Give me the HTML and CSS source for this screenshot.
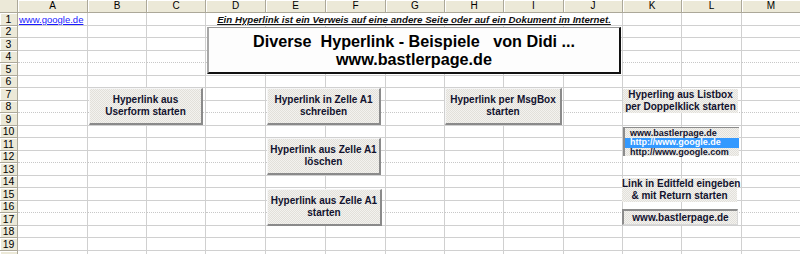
FILE: index.html
```html
<!DOCTYPE html>
<html lang="de">
<head>
  <meta charset="UTF-8" />
  <title>Diverse Hyperlink - Beispiele</title>
  <link rel="stylesheet" href="styles.css">
</head>
<body>
  <div class="sheet">
    <div class="grid" id="grid"></div>

    <div class="title-box">
      <div>Diverse&nbsp; Hyperlink - Beispiele &nbsp; von Didi ...</div>
      <div>www.bastlerpage.de</div>
    </div>

    <button class="macro-btn btn-userform">Hyperlink aus<br>Userform starten</button>
    <button class="macro-btn btn-write">Hyperlink in Zelle A1<br>schreiben</button>
    <button class="macro-btn btn-delete">Hyperlink aus Zelle A1<br>löschen</button>
    <button class="macro-btn btn-start">Hyperlink aus Zelle A1<br>starten</button>
    <button class="macro-btn btn-msgbox">Hyperlink per MsgBox<br>starten</button>

    <div class="form-label label-list">Hyperling aus Listbox<br>per Doppelklick starten</div>
    <ul class="listbox">
      <li>www.bastlerpage.de</li>
      <li class="selected">http://www.google.de</li>
      <li>http://www.google.com</li>
    </ul>

    <div class="form-label label-edit">Link in Editfeld eingeben<br>&amp; mit Return starten</div>
    <div class="editbox">www.bastlerpage.de</div>
  </div>

  <script>
    const columns = ["A", "B", "C", "D", "E", "F", "G", "H", "I", "J", "K", "L", "M"];
    const grid = document.getElementById("grid");

    function addCell(className, text) {
      const div = document.createElement("div");
      div.className = className;
      if (text) div.textContent = text;
      grid.appendChild(div);
      return div;
    }

    addCell("corner");
    columns.forEach(col => addCell("col-head", col));

    for (let row = 1; row <= 20; row++) {
      const dashed = row % 4 === 0 ? " dashed" : "";
      // row 20 is only a sliver at the bottom edge, its number stays hidden
      addCell("row-head", row < 20 ? String(row) : "");

      columns.forEach(col => {
        if (row === 1 && col === "A") {
          const cell = addCell("cell");
          cell.innerHTML = '<a href="#" class="link">www.google.de</a>';
        } else if (row === 1 && col === "D") {
          addCell("cell intro", "Ein Hyperlink ist ein Verweis auf eine andere Seite oder auf ein Dokument im Internet.");
        } else if (row === 1 && "EFGHIJ".includes(col)) {
          return;
        } else {
          addCell("cell" + dashed);
        }
      });
    }
  </script>
</body>
</html>
```

FILE: styles.css
```css
* {
  box-sizing: border-box;
}

body {
  margin: 0;
  background: #fff;
  font-family: "Liberation Sans", Arial, sans-serif;
  overflow: hidden;
}

.sheet {
  position: relative;
  width: 800px;
  height: 254px;
  overflow: hidden;
}

.grid {
  display: grid;
  grid-template-columns: 18px 70px 59px 59px 60px 60px 60px 59px 59px 60px 59px 59px 60px 59px;
  grid-template-rows: 13px repeat(10, 13px 12px);
}

.corner,
.col-head,
.row-head {
  background: #ece9d8;
  border-right: 1px solid #aca899;
  border-bottom: 1px solid #aca899;
  color: #000;
  font-size: 10px;
  display: flex;
  align-items: center;
  justify-content: center;
  line-height: 1;
}

.col-head {
  box-shadow: inset 1px 1px 0 #fff;
}

.row-head {
  box-shadow: inset 1px 1px 0 #fff;
  font-size: 10.5px;
}

.cell {
  border-right: 1px solid #d0d0d0;
  border-bottom: 1px solid #d0d0d0;
  font-size: 10px;
  white-space: nowrap;
  overflow: visible;
}

.cell.dashed {
  border-bottom: 1px dotted #c8c8c8;
}

.link {
  display: block;
  padding: 1px 0 0 1px;
  color: #1a1aff;
  font-size: 9.5px;
  text-decoration: underline;
}

.intro {
  grid-column: span 7;
  text-align: center;
  font-weight: bold;
  font-style: italic;
  text-decoration: underline;
  font-size: 9.7px;
  color: #111;
  padding-top: 1px;
}

.title-box {
  position: absolute;
  left: 207px;
  top: 27px;
  width: 414px;
  height: 47px;
  background: #fdfdfd;
  border-top: 1px solid #9a9a9a;
  border-left: 2px solid #a8a8a8;
  border-right: 2px solid #111;
  border-bottom: 2px solid #111;
  display: flex;
  flex-direction: column;
  justify-content: center;
  align-items: center;
  font-size: 16.2px;
  font-weight: bold;
  line-height: 18px;
  color: #000;
  white-space: nowrap;
}

.macro-btn,
.form-label,
.listbox,
.editbox {
  position: absolute;
  background: repeating-conic-gradient(#e2e0da 0 25%, #f3f2ef 0 50%) 0 0 / 2px 2px;
  color: #12122e;
  font-family: "Liberation Sans", Arial, sans-serif;
  font-weight: bold;
  font-size: 10px;
  line-height: 12.5px;
  text-align: center;
  white-space: nowrap;
}

.macro-btn {
  width: 114px;
  height: 37px;
  padding: 0;
  border-top: 1px solid #f6f6f6;
  border-left: 1px solid #f6f6f6;
  border-right: 2px solid #8a8a8a;
  border-bottom: 2px solid #8a8a8a;
  cursor: pointer;
}

.btn-userform { left: 89px; top: 88px; }
.btn-write { left: 267px; top: 88px; }
.btn-delete { left: 267px; top: 138px; }
.btn-start { left: 267px; top: 189px; width: 115px; }
.btn-msgbox { left: 445px; top: 88px; width: 117px; }

.form-label {
  width: 115px;
  height: 24px;
  padding-top: 0;
  line-height: 12px;
}

.label-list { left: 623px; top: 89px; }
.label-edit { left: 622px; top: 178px; }

.listbox {
  left: 623px;
  top: 127px;
  width: 116px;
  height: 29px;
  margin: 0;
  padding: 1px 0 0;
  list-style: none;
  border-top: 1px solid #8c8c8c;
  border-left: 2px solid #8c8c8c;
  font-size: 9px;
  line-height: 9.3px;
  text-align: left;
}

.listbox li {
  padding-left: 5px;
  height: 9.3px;
}

.listbox li.selected {
  background: #3399ff;
  color: #fff;
}

.editbox {
  left: 622px;
  top: 209px;
  width: 116px;
  height: 16px;
  border-top: 2px solid #8c8c8c;
  border-left: 2px solid #8c8c8c;
  border-right: 1px solid #d8d8d8;
  border-bottom: 1px solid #d8d8d8;
  line-height: 13px;
}
```
